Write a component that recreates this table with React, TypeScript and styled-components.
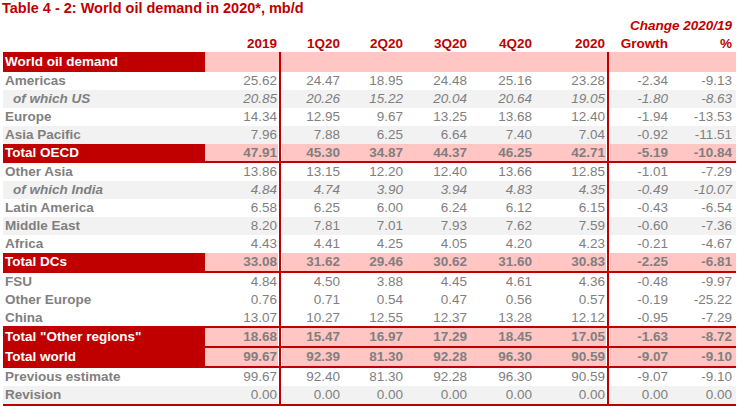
import * as React from 'react';
import styled, {createGlobalStyle, css} from 'styled-components';

const RED = '#c00000';
const PINK = '#ffc6c4';
const SHADE = '#f2f2f2';
const INK = '#7f7f7f';

const GlobalStyle = createGlobalStyle`
  html, body {
    margin: 0;
    padding: 0;
    background: #fff;
  }
  body {
    font-family: "Liberation Sans", Arial, sans-serif;
  }
`;

const COLUMNS = '202px 73px 4px 60px 63px 64px 65px 72px 4px 60px 66px';

type Tone = 'plain' | 'shade' | 'total' | 'head';

const Page = styled.div`
  width: 740px;
  height: 407px;
  overflow: hidden;
  padding: 0 4px 0 3px;
  box-sizing: border-box;
`;

const Title = styled.div`
  margin-left: -1px;
  font-size: 14.5px;
  line-height: 16px;
  font-weight: bold;
  color: ${RED};
`;

const ChangeLine = styled.div`
  margin-top: 2px;
  padding-right: 4px;
  text-align: right;
  font-size: 13.5px;
  line-height: 16px;
  font-weight: bold;
  font-style: italic;
  color: ${RED};
`;

const Table = styled.div`
  display: flex;
  flex-direction: column;
`;

const HeadRow = styled.div`
  display: grid;
  grid-template-columns: ${COLUMNS};
  height: 18px;
  padding-top: 2px;
  box-sizing: border-box;
  font-size: 13.5px;
  line-height: 16px;
  font-weight: bold;
  color: ${RED};
`;

const HeadCell = styled.div<{ $pad?: number }>`
  text-align: right;
  padding-right: ${p => p.$pad ?? 2}px;
  white-space: nowrap;
`;

const Row = styled.div<{ $tall?: boolean; $lineTop?: boolean; $lineBottom?: boolean }>`
  display: grid;
  grid-template-columns: ${COLUMNS};
  height: ${p => (p.$tall ? '20px' : '17.9px')};
  font-size: 13.5px;
  line-height: ${p => (p.$tall ? '20px' : '17.9px')};
  color: ${INK};
  ${p => p.$lineTop && css`border-top: 2px solid ${RED};`}
  ${p => p.$lineBottom && css`border-bottom: 2px solid ${RED};`}
`;

const bgFor = (tone: Tone) =>
    tone === 'shade' ? SHADE : tone === 'total' || tone === 'head' ? PINK : '#fff';

const LabelCell = styled.div<{ $tone: Tone; $sub?: boolean }>`
  padding-left: ${p => (p.$sub ? 10 : 2)}px;
  font-weight: bold;
  white-space: nowrap;
  background: ${p => (p.$tone === 'total' || p.$tone === 'head' ? RED : bgFor(p.$tone))};
  color: ${p => (p.$tone === 'total' || p.$tone === 'head' ? '#fff' : INK)};
  font-style: ${p => (p.$sub ? 'italic' : 'normal')};
`;

const Cell = styled.div<{ $tone: Tone; $sub?: boolean; $pad?: number }>`
  text-align: right;
  padding-right: ${p => p.$pad ?? 2}px;
  white-space: nowrap;
  background: ${p => bgFor(p.$tone)};
  font-weight: ${p => (p.$tone === 'total' ? 'bold' : 'normal')};
  font-style: ${p => (p.$sub ? 'italic' : 'normal')};
`;

const Sep = styled.div<{ $tone: Tone }>`
  background: linear-gradient(to right,
    ${p => (p.$tone === 'head' ? PINK : '#fff')} 1px,
    ${RED} 1px, ${RED} 3px,
    ${p => (p.$tone === 'head' ? PINK : '#fff')} 3px);
`;

type Line = {
    label: string;
    v: string[];
    tone?: Tone;
    sub?: boolean;
    lineTop?: boolean;
    lineBottom?: boolean;
};

const zeros = ['0.00', '0.00', '0.00', '0.00', '0.00', '0.00', '0.00', '0.00'];

const lines: Line[] = [
    {label: 'Americas', v: ['25.62', '24.47', '18.95', '24.48', '25.16', '23.28', '-2.34', '-9.13']},
    {label: 'of which US', sub: true, tone: 'shade', v: ['20.85', '20.26', '15.22', '20.04', '20.64', '19.05', '-1.80', '-8.63']},
    {label: 'Europe', v: ['14.34', '12.95', '9.67', '13.25', '13.68', '12.40', '-1.94', '-13.53']},
    {label: 'Asia Pacific', tone: 'shade', v: ['7.96', '7.88', '6.25', '6.64', '7.40', '7.04', '-0.92', '-11.51']},
    {label: 'Total OECD', tone: 'total', lineBottom: true, v: ['47.91', '45.30', '34.87', '44.37', '46.25', '42.71', '-5.19', '-10.84']},
    {label: 'Other Asia', v: ['13.86', '13.15', '12.20', '12.40', '13.66', '12.85', '-1.01', '-7.29']},
    {label: 'of which India', sub: true, tone: 'shade', v: ['4.84', '4.74', '3.90', '3.94', '4.83', '4.35', '-0.49', '-10.07']},
    {label: 'Latin America', v: ['6.58', '6.25', '6.00', '6.24', '6.12', '6.15', '-0.43', '-6.54']},
    {label: 'Middle East', tone: 'shade', v: ['8.20', '7.81', '7.01', '7.93', '7.62', '7.59', '-0.60', '-7.36']},
    {label: 'Africa', v: ['4.43', '4.41', '4.25', '4.05', '4.20', '4.23', '-0.21', '-4.67']},
    {label: 'Total DCs', tone: 'total', lineBottom: true, v: ['33.08', '31.62', '29.46', '30.62', '31.60', '30.83', '-2.25', '-6.81']},
    {label: 'FSU', v: ['4.84', '4.50', '3.88', '4.45', '4.61', '4.36', '-0.48', '-9.97']},
    {label: 'Other Europe', v: ['0.76', '0.71', '0.54', '0.47', '0.56', '0.57', '-0.19', '-25.22']},
    {label: 'China', v: ['13.07', '10.27', '12.55', '12.37', '13.28', '12.12', '-0.95', '-7.29']},
    {label: 'Total "Other regions"', tone: 'total', lineTop: true, lineBottom: true, v: ['18.68', '15.47', '16.97', '17.29', '18.45', '17.05', '-1.63', '-8.72']},
    {label: 'Total world', tone: 'total', lineBottom: true, v: ['99.67', '92.39', '81.30', '92.28', '96.30', '90.59', '-9.07', '-9.10']},
    {label: 'Previous estimate', v: ['99.67', '92.40', '81.30', '92.28', '96.30', '90.59', '-9.07', '-9.10']},
    {label: 'Revision', tone: 'shade', lineBottom: true, v: zeros},
];

const headers = ['2019', '1Q20', '2Q20', '3Q20', '4Q20', '2020', 'Growth', '%'];

// value columns 0..5 sit left of the second rule, 6..7 right of it
const padFor = (i: number) => (i === 0 || i === 5 ? 1 : i === 7 ? 4 : 2);

const DataRow: React.FC<{ line: Line }> = ({line}) => {
    const tone = line.tone ?? 'plain';
    const cells = line.v.map((v, i) => (
        <Cell key={i} $tone={tone} $sub={line.sub} $pad={padFor(i)}>{v}</Cell>
    ));
    return (
        <Row $lineTop={line.lineTop} $lineBottom={line.lineBottom}>
            <LabelCell $tone={tone} $sub={line.sub}>{line.label}</LabelCell>
            {cells[0]}
            <Sep $tone={tone}/>
            {cells.slice(1, 6)}
            <Sep $tone={tone}/>
            {cells.slice(6)}
        </Row>
    );
};

export default function App() {
    return (
        <Page>
            <GlobalStyle/>
            <Title>Table 4 - 2: World oil demand in 2020*, mb/d</Title>
            <ChangeLine>Change 2020/19</ChangeLine>
            <Table>
                <HeadRow>
                    <div/>
                    <HeadCell $pad={1}>{headers[0]}</HeadCell>
                    <div/>
                    {headers.slice(1, 6).map((h, i) => <HeadCell key={h} $pad={i === 4 ? 1 : 2}>{h}</HeadCell>)}
                    <div/>
                    <HeadCell>{headers[6]}</HeadCell>
                    <HeadCell $pad={4}>{headers[7]}</HeadCell>
                </HeadRow>
                <Row $tall>
                    <LabelCell $tone="head">World oil demand</LabelCell>
                    <Cell $tone="head"/>
                    <Sep $tone="head"/>
                    <Cell $tone="head"/>
                    <Cell $tone="head"/>
                    <Cell $tone="head"/>
                    <Cell $tone="head"/>
                    <Cell $tone="head"/>
                    <Sep $tone="head"/>
                    <Cell $tone="head"/>
                    <Cell $tone="head"/>
                </Row>
                {lines.map(l => <DataRow key={l.label} line={l}/>)}
            </Table>
        </Page>
    );
}
